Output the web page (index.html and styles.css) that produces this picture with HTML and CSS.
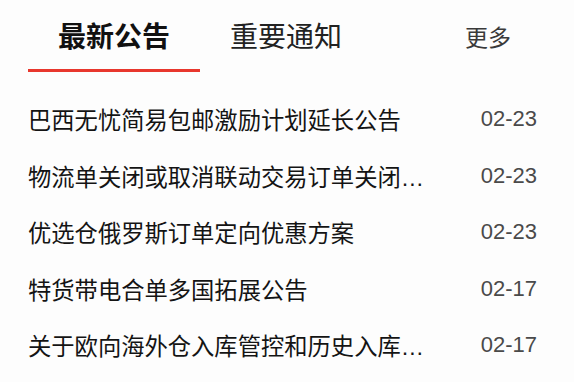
FILE: index.html
```html
<!DOCTYPE html>
<html lang="zh-CN">
<head>
    <meta charset="UTF-8">
    <meta name="viewport" content="width=device-width, initial-scale=1.0">
    <title>公告</title>
    <link rel="stylesheet" href="styles.css">
</head>
<body>
    <div class="panel">
        <div class="tabs">
            <div class="tab active">最新公告</div>
            <div class="tab">重要通知</div>
            <a class="more" href="#">更多</a>
        </div>

        <ul class="news">
            <li class="news-item">
                <span class="news-title">巴西无忧简易包邮激励计划延长公告</span>
                <span class="news-date">02-23</span>
            </li>
            <li class="news-item">
                <span class="news-title">物流单关闭或取消联动交易订单关闭…</span>
                <span class="news-date">02-23</span>
            </li>
            <li class="news-item">
                <span class="news-title">优选仓俄罗斯订单定向优惠方案</span>
                <span class="news-date">02-23</span>
            </li>
            <li class="news-item">
                <span class="news-title">特货带电合单多国拓展公告</span>
                <span class="news-date">02-17</span>
            </li>
            <li class="news-item">
                <span class="news-title">关于欧向海外仓入库管控和历史入库…</span>
                <span class="news-date">02-17</span>
            </li>
        </ul>
    </div>
</body>
</html>
```

FILE: styles.css
```css
body {
    margin: 0;
    padding: 0;
    background-color: #fdfdfd;
    font-family: "Liberation Sans", "Noto Sans CJK SC", sans-serif;
}

.panel {
    width: 509px;
    padding-left: 28px;
}

.tabs {
    display: flex;
    align-items: flex-start;
    height: 72px;
}

.tab {
    padding: 18px 30px 11px;
    line-height: 40px;
    font-size: 28px;
    color: #222;
    border-bottom: 3px solid transparent;
}

.tab.active {
    font-weight: bold;
    color: #111;
    border-bottom-color: #e8372d;
}

.more {
    margin-left: auto;
    padding: 18px 26px 0 0;
    line-height: 40px;
    font-size: 23px;
    color: #3a3a3a;
    text-decoration: none;
}

ul {
    list-style: none;
    padding: 0;
    margin: 0;
}

.news {
    margin-top: 19px;
}

.news-item {
    display: flex;
    align-items: center;
    justify-content: space-between;
    height: 56.5px;
}

.news-title {
    max-width: 400px;
    overflow: hidden;
    white-space: nowrap;
    text-overflow: ellipsis;
    font-size: 23.3px;
    color: #141414;
}

.news-date {
    font-size: 22px;
    color: #4a4a4a;
}
```
